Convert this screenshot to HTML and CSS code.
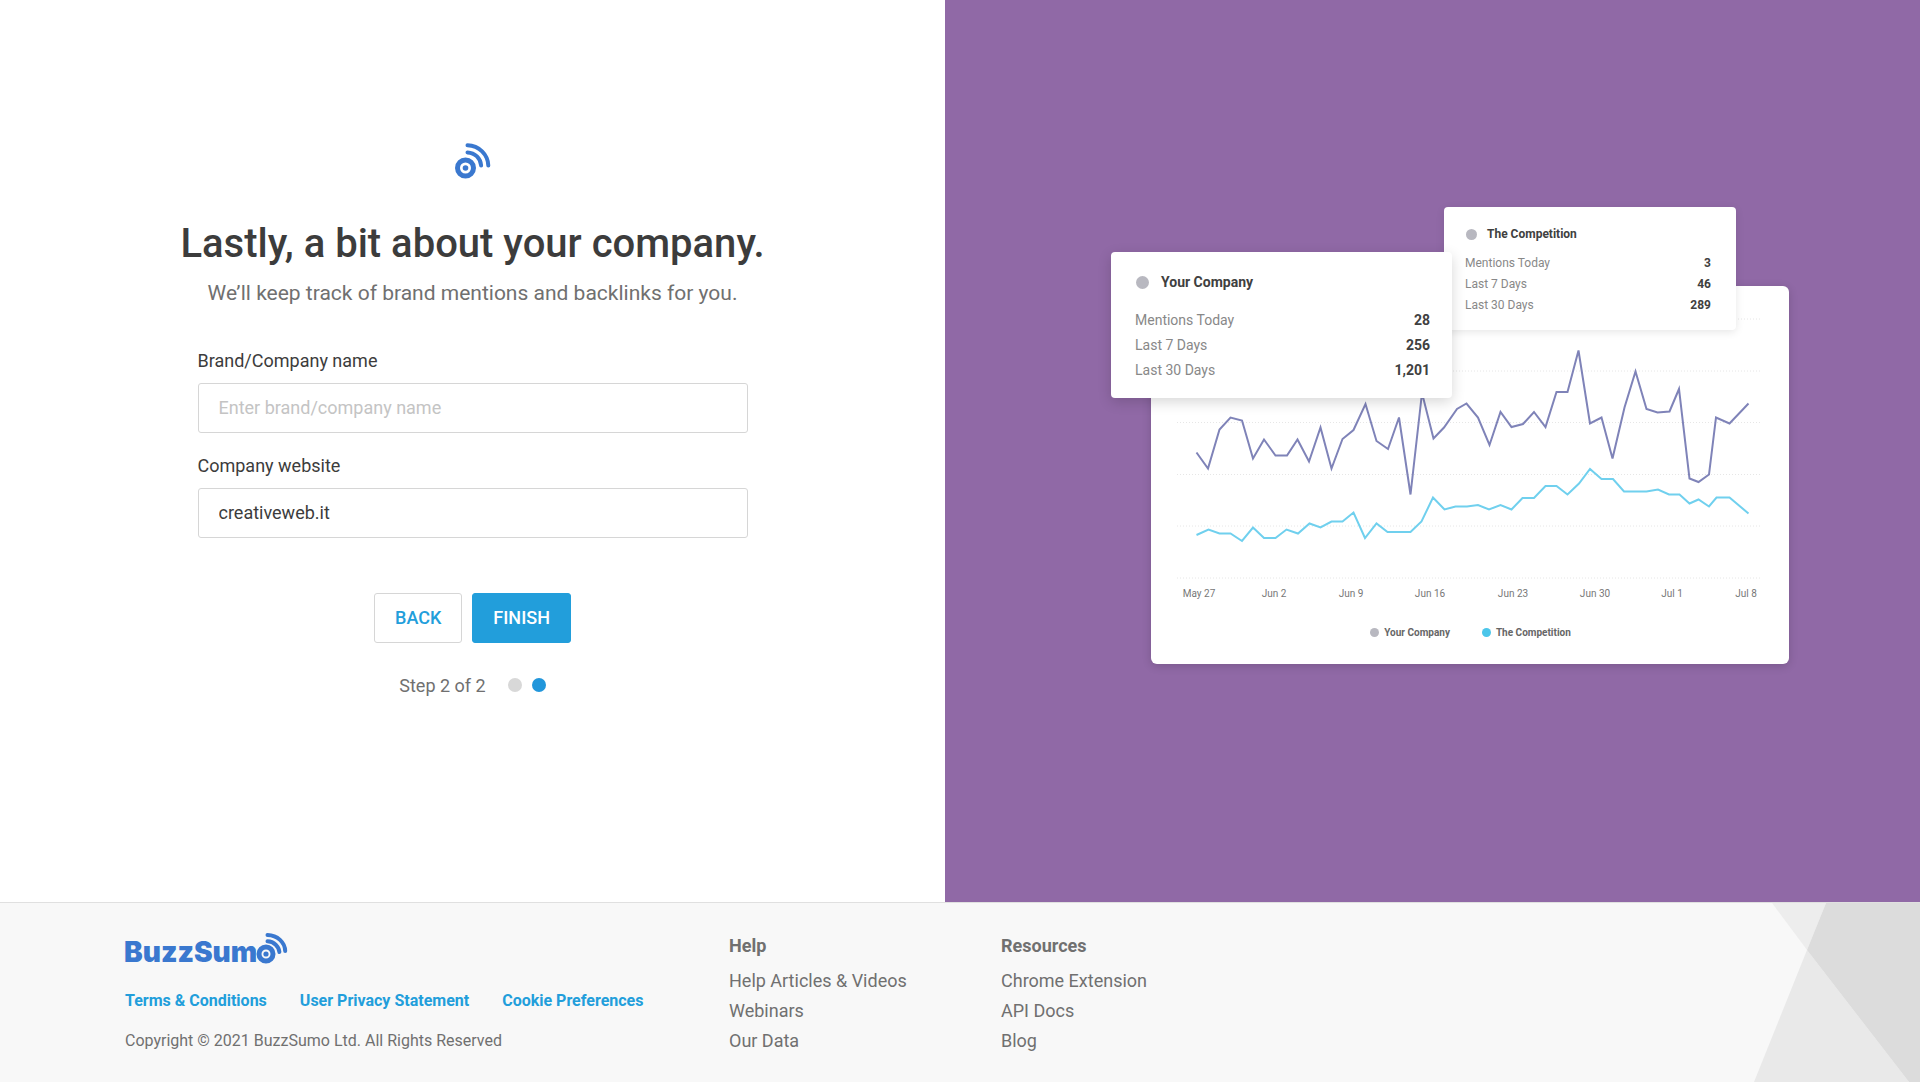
FILE: index.html
```html
<!DOCTYPE html>
<html lang="en">
<head>
<meta charset="utf-8">
<meta name="viewport" content="width=device-width, initial-scale=1">
<title>BuzzSumo - Your company</title>
<link rel="stylesheet" href="styles.css">
</head>
<body>
<main class="signup">
  <section class="form-panel">
    <svg class="mark" viewBox="0 0 36 36" aria-hidden="true">
      <circle class="mark-ring" cx="10.500" cy="25" r="8"/>
      <circle class="mark-dot" cx="10.500" cy="25" r="2.800"/>
      <path class="mark-wave" d="M12.500 9.400C20 9.700 25.700 15.500 26.100 22.500"/>
      <path class="mark-wave" d="M12.500 2.200C24 2.400 33 11.500 33.300 22.500"/>
    </svg>
    <h1 class="title">Lastly, a bit about your company.</h1>
    <p class="subtitle">We’ll keep track of brand mentions and backlinks for you.</p>
    <form class="form">
      <label class="label" for="brand">Brand/Company name</label>
      <input class="input" id="brand" type="text" placeholder="Enter brand/company name">
      <label class="label" for="website">Company website</label>
      <input class="input" id="website" type="text" value="creativeweb.it">
      <div class="actions">
        <button class="button button-back" type="button">BACK</button>
        <button class="button button-finish" type="submit">FINISH</button>
      </div>
      <div class="steps">
        <span>Step 2 of 2</span>
        <span class="step-dots"><i class="dot"></i><i class="dot dot-active"></i></span>
      </div>
    </form>
  </section>

  <section class="showcase">
    <div class="illustration">
      <div class="chart-card">
        <svg class="chart" viewBox="0 0 585 300" role="img" aria-label="Mentions over time">
          <g class="grid">
            <path d="M0 13H585M0 65H585M0 116.500H585M0 168.500H585M0 220H585M0 272H585"/>
          </g>
          <polyline class="line line-own" points="19.500,146.500 31,162.500 42.500,123.500 53.500,111.500 65,114.500 76,152.500 87,133.500 98.500,149.500 110,149.500 120.500,133.500 132,155.500 143.500,121.500 154.500,162.500 165.500,133 176.500,124 188.500,98 199.500,135 211,143 222,111.500 233.500,188.500 245,87 256.500,132.500 267,121.500 280,103 289.500,97.500 301,111.500 312.500,139 323.500,106 334.500,121 346,118 357,106 368.500,121 379.500,86 390.500,86 401.500,44.500 413,117.500 424.500,111.500 435.500,152.500 447.500,101.500 458.500,65.500 469.500,103 480.500,106.500 492.500,105.500 502,83 512.500,172.500 521.500,176 532,168.500 539,111.500 552.500,117.500 571.500,97.500"/>
          <polyline class="line line-rival" points="19.500,229 31.500,223.500 42.500,227.500 53.500,227.500 65,235 76,221.500 87,232 98.500,232 109.500,223.500 121,227.500 132.500,217.500 143.500,221.500 154.500,215.500 165.500,215.500 176.500,206.500 188,232 199.500,217.500 210.500,226 233.500,226 244.500,215.500 256,191.500 267.500,203.500 278.500,200.500 290,200.500 301,199 312,203.500 323.500,199 334.500,203.500 345.500,192 357,192 368.500,180 379.500,180 390.500,188.500 402,177.500 413,163 424.500,173 436,173 447,185.500 469.500,185.500 481,183.500 492,188.500 502.500,188.500 512.500,197.500 521.500,193.500 532,200.500 539.500,191.500 552.500,191.500 571.500,207.500"/>
          <g class="axis">
            <text x="22" y="291">May 27</text>
            <text x="97" y="291">Jun 2</text>
            <text x="174" y="291">Jun 9</text>
            <text x="253" y="291">Jun 16</text>
            <text x="336" y="291">Jun 23</text>
            <text x="418" y="291">Jun 30</text>
            <text x="495" y="291">Jul 1</text>
            <text x="569" y="291">Jul 8</text>
          </g>
        </svg>
        <div class="legend">
          <span class="legend-item"><i class="legend-dot"></i>Your Company</span>
          <span class="legend-item"><i class="legend-dot legend-dot-rival"></i>The Competition</span>
        </div>
      </div>
      <div class="stat-card stat-card-rival">
        <h2 class="stat-title"><i class="stat-dot"></i>The Competition</h2>
        <table class="stats">
          <tr><th scope="row">Mentions Today</th><td>3</td></tr>
          <tr><th scope="row">Last 7 Days</th><td>46</td></tr>
          <tr><th scope="row">Last 30 Days</th><td>289</td></tr>
        </table>
      </div>
      <div class="stat-card stat-card-own">
        <h2 class="stat-title"><i class="stat-dot"></i>Your Company</h2>
        <table class="stats">
          <tr><th scope="row">Mentions Today</th><td>28</td></tr>
          <tr><th scope="row">Last 7 Days</th><td>256</td></tr>
          <tr><th scope="row">Last 30 Days</th><td>1,201</td></tr>
        </table>
      </div>
    </div>
  </section>
</main>

<footer class="footer">
  <svg class="footer-art" viewBox="0 0 166 179" preserveAspectRatio="none" aria-hidden="true">
    <path fill="#ededed" d="M18 0H72L53 47z"/>
    <path fill="#e9e9e9" d="M53 47L155 179H0z"/>
    <path fill="#dcdcdc" d="M72 0H166V179H155L53 47z"/>
  </svg>
  <div class="footer-brand">
    <svg class="logo" viewBox="-2 0 166 40" role="img" aria-label="BuzzSumo">
      <text class="logo-text" x="-1" y="29">BuzzSum</text>
      <circle class="logo-ring" cx="141" cy="21" r="7"/>
      <circle class="mark-dot" cx="141" cy="21" r="2.600"/>
      <path class="logo-wave" d="M142.500 8.300C149 8.500 154 13.500 154.400 19"/>
      <path class="logo-wave" d="M142.500 2C152.500 2.200 160 9.500 160.200 18"/>
    </svg>
    <nav class="legal">
      <a href="#">Terms &amp; Conditions</a>
      <a href="#">User Privacy Statement</a>
      <a href="#">Cookie Preferences</a>
    </nav>
    <p class="copyright">Copyright © 2021 BuzzSumo Ltd. All Rights Reserved</p>
  </div>
  <nav class="footer-column footer-help">
    <h3>Help</h3>
    <a href="#">Help Articles &amp; Videos</a>
    <a href="#">Webinars</a>
    <a href="#">Our Data</a>
  </nav>
  <nav class="footer-column">
    <h3>Resources</h3>
    <a href="#">Chrome Extension</a>
    <a href="#">API Docs</a>
    <a href="#">Blog</a>
  </nav>
</footer>
</body>
</html>
```
FILE: styles.css
```css
* {
  box-sizing: border-box;
}

body {
  display: flex;
  flex-direction: column;
  min-height: 100vh;
  margin: 0;
  color: #3c3c3c;
  background: #fff;
  font-family: Roboto, "Liberation Sans", sans-serif;
  font-size: 18px;
}

h1, h2, h3, p {
  margin: 0;
}

a {
  text-decoration: none;
}

/* Sign-up step */

.signup {
  display: grid;
  flex: 1;
  grid-template-columns: 945fr 975fr;
}

.form-panel {
  display: flex;
  flex-direction: column;
  align-items: center;
  padding: 143px 24px 64px;
}

.mark {
  width: 36px;
  height: 36px;
}

.mark-ring,
.mark-wave,
.logo-ring,
.logo-wave {
  fill: none;
  stroke: #3a78cf;
  stroke-linecap: round;
}

.mark-ring {
  stroke-width: 5;
}

.mark-wave {
  stroke-width: 4;
}

.mark-dot {
  fill: #3a78cf;
}

.title {
  margin-top: 41px;
  font-size: 40px;
  font-weight: 500;
  line-height: 48px;
}

.subtitle {
  margin-top: 9px;
  color: #707070;
  font-size: 21px;
  line-height: 32px;
}

.form {
  display: flex;
  flex-direction: column;
  width: 100%;
  max-width: 550px;
  margin-top: 40px;
}

.label {
  margin-bottom: 10px;
  line-height: 24px;
}

.input {
  width: 100%;
  height: 50px;
  margin-bottom: 21px;
  padding: 0 20px 2px;
  border: 1px solid #d6d6d6;
  border-radius: 3px;
  color: #3c3c3c;
  background: #fff;
  font: inherit;
}

.input::placeholder {
  color: #c4c4c4;
}

.actions {
  display: flex;
  justify-content: center;
  gap: 10px;
  margin-top: 34px;
}

.button {
  height: 50px;
  padding: 0 20px 2px;
  border: 1px solid #d6d6d6;
  border-radius: 3px;
  font: inherit;
  font-weight: 500;
}

.button-back {
  color: #229edb;
  background: #fff;
}

.button-finish {
  border-color: #229edb;
  color: #fff;
  background: #229edb;
}

.steps {
  display: flex;
  align-items: center;
  justify-content: center;
  gap: 22px;
  margin-top: 31px;
  color: #707070;
  line-height: 24px;
}

.step-dots {
  display: flex;
  gap: 10px;
  padding-bottom: 2px;
}

.dot {
  width: 14px;
  height: 14px;
  border-radius: 50%;
  background: #d8d8d8;
}

.dot-active {
  background: #2196db;
}

/* Illustration */

.showcase {
  display: flex;
  align-items: center;
  justify-content: center;
  padding: 0 0 32px 35px;
  background: #9069a6;
}

.illustration {
  position: relative;
  width: 678px;
  padding: 79px 0 0 40px;
}

.chart-card {
  padding: 20px 27px 21px 26px;
  border-radius: 6px;
  background: #fff;
  box-shadow: 0 2px 10px rgba(0, 0, 0, 0.16);
}

.chart {
  display: block;
  width: 100%;
}

.grid {
  stroke: #e6e6e6;
  stroke-dasharray: 1 2;
}

.line {
  fill: none;
  stroke-width: 2;
}

.line-own {
  stroke: #7f83b8;
}

.line-rival {
  stroke: #70d0ee;
}

.axis {
  fill: #777;
  font-size: 10px;
  text-anchor: middle;
}

.legend {
  display: flex;
  justify-content: center;
  gap: 32px;
  margin-top: 19px;
  padding: 0 0 2px 2px;
  color: #666;
  font-size: 10px;
  font-weight: 700;
  line-height: 16px;
}

.legend-item {
  display: flex;
  align-items: center;
  gap: 5px;
}

.legend-dot {
  width: 9px;
  height: 9px;
  border-radius: 50%;
  background: #b8b8c0;
}

.legend-dot-rival {
  background: #4cc6ea;
}

.stat-card {
  position: absolute;
  border-radius: 4px;
  background: #fff;
}

.stat-card-rival {
  top: 0;
  left: 333px;
  width: 292px;
  height: 123px;
  padding: 17px 25px 0 21px;
  box-shadow: 0 2px 8px rgba(0, 0, 0, 0.1);
  font-size: 12px;
  line-height: 21px;
}

.stat-card-own {
  top: 45px;
  left: 0;
  width: 341px;
  height: 146px;
  padding: 18px 22px 0 24px;
  box-shadow: 0 4px 14px rgba(0, 0, 0, 0.16);
  font-size: 14px;
  line-height: 25px;
}

.stat-title {
  display: flex;
  align-items: center;
  gap: 12px;
  margin-bottom: 13px;
  padding-left: 1px;
  color: #404040;
  font-size: inherit;
  font-weight: 700;
}

.stat-card-rival .stat-title {
  gap: 10px;
  margin-bottom: 8px;
}

.stat-dot {
  width: 13px;
  height: 13px;
  border-radius: 50%;
  background: #b8b8c0;
}

.stat-card-rival .stat-dot {
  width: 11px;
  height: 11px;
}

.stats {
  width: 100%;
  border-collapse: collapse;
}

.stats th,
.stats td {
  padding: 0;
}

.stats th {
  color: #888;
  font-weight: 400;
  text-align: left;
}

.stats td {
  color: #404040;
  font-weight: 700;
  text-align: right;
}

/* Footer */

.footer {
  position: relative;
  display: flex;
  min-height: 180px;
  padding: 0 125px;
  border-top: 1px solid #e0e0e0;
  color: #707070;
  background: #f8f8f8;
}

.footer-art {
  position: absolute;
  top: 0;
  right: 0;
  width: 166px;
  height: 100%;
}

.footer-brand {
  width: 604px;
  padding-top: 30px;
}

.logo {
  display: block;
  width: 166px;
  height: 40px;
  margin-left: -2px;
}

.logo-text {
  fill: #3a78cf;
  font-family: Inter, sans-serif;
  font-size: 28px;
  font-weight: 900;
}

.logo-ring {
  stroke-width: 5;
}

.logo-wave {
  stroke-width: 4;
}

.legal {
  display: flex;
  gap: 33px;
  margin-top: 16px;
  font-size: 16px;
  font-weight: 700;
  line-height: 24px;
}

.legal a {
  color: #229edb;
}

.copyright {
  margin-top: 16px;
  font-size: 16px;
  line-height: 24px;
}

.footer-column {
  display: flex;
  flex-direction: column;
  padding-top: 28px;
  line-height: 30px;
}

.footer-help {
  width: 272px;
}

.footer-column h3 {
  margin-bottom: 5px;
  font-size: 18px;
  font-weight: 700;
}

.footer-column a {
  color: #707070;
}
```
